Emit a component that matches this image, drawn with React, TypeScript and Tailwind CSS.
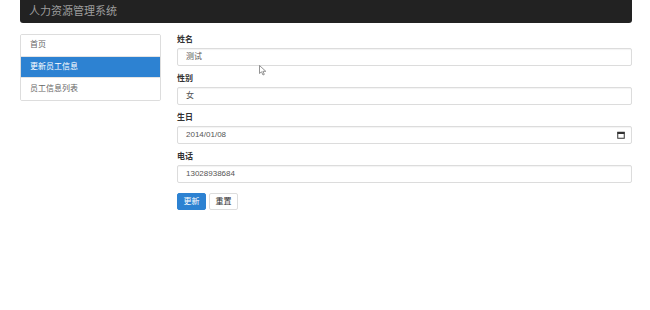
const fields = [
  { label: '姓名', value: '测试' },
  { label: '性别', value: '女' },
  { label: '生日', value: '2014/01/08', date: true },
  { label: '电话', value: '13028938684' },
]

const menu = ['首页', '更新员工信息', '员工信息列表']

export default function App() {
  return (
    <div className="relative h-[310px] w-[650px] bg-white pl-[20px] pr-[18px] font-['Liberation_Sans','Noto_Sans_CJK_SC',sans-serif] text-[#333]">
      <div className="flex h-[23px] items-center rounded-b-[3px] bg-[#222] pl-[9px] text-[11px] text-[#9d9d9d]">
        人力资源管理系统
      </div>
      <div className="mt-[11px] flex">
        <ul className="w-[141px] shrink-0 self-start overflow-hidden rounded-[2px] border border-[#ddd] text-[8px] text-[#666]">
          {menu.map((m, i) => (
            <li
              key={m}
              className={
                'flex h-[21.5px] items-center pl-[9px] ' +
                (i === 1 ? 'bg-[#2d82d2] text-white' : 'bg-white') +
                (i < menu.length - 1 ? ' border-b border-[#e4e4e4]' : '')
              }
            >
              {m}
            </li>
          ))}
        </ul>
        <form className="ml-[16px] flex flex-1 flex-col">
          {fields.map((f) => (
            <div key={f.label} className="mb-[7px] flex flex-col">
              <label className="mb-[3px] h-[11px] text-[8px] font-bold leading-[11px] text-[#333]">
                {f.label}
              </label>
              <div className="flex h-[18px] items-center justify-between rounded-[2px] border border-[#dcdcdc] bg-white pl-[8px] pr-[6px] text-[8px] text-[#555] shadow-[inset_0_1px_1px_rgba(0,0,0,0.05)]">
                <span>{f.value}</span>
                {f.date && (
                  <svg width="8" height="8" viewBox="0 0 8 8" fill="none">
                    <rect x="0.75" y="1.25" width="6.5" height="6" stroke="#333" strokeWidth="1" />
                    <rect x="0.5" y="1" width="7" height="2" fill="#333" />
                  </svg>
                )}
              </div>
            </div>
          ))}
          <div className="mt-[3px] flex gap-[3px]">
            <button type="button" className="h-[17px] w-[29px] rounded-[2px] border border-[#2d82d2] bg-[#2d82d2] text-[8px] text-white">
              更新
            </button>
            <button type="button" className="h-[17px] w-[29px] rounded-[2px] border border-[#ddd] bg-white text-[8px] text-[#333]">
              重置
            </button>
          </div>
        </form>
      </div>
      <svg className="absolute left-[259px] top-[65px]" width="8" height="11" viewBox="0 0 8 11">
        <path d="M0.5 0.5 L0.5 8.5 L2.5 6.8 L4 10 L5.3 9.4 L3.9 6.3 L6.8 6.3 Z" fill="white" stroke="#777" strokeWidth="0.8" strokeLinejoin="round" />
      </svg>
    </div>
  )
}
